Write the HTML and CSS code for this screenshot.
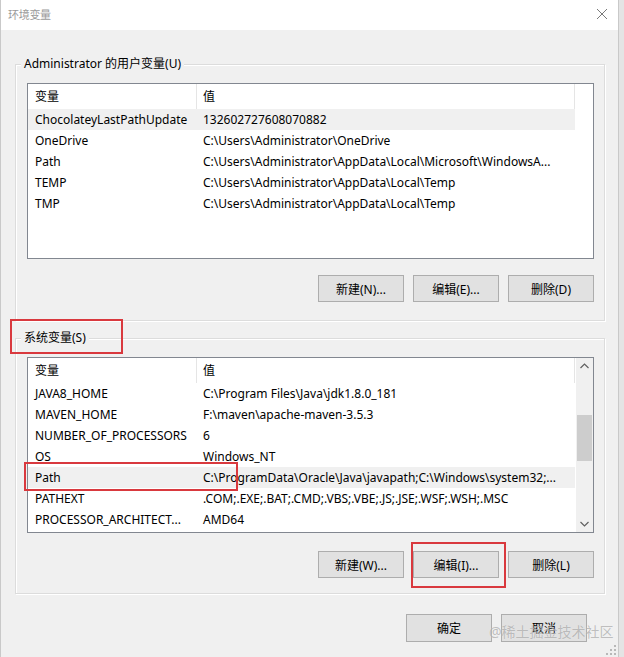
FILE: index.html
```html
<!DOCTYPE html>
<html lang="zh-CN">
<head>
<meta charset="utf-8">
<title>环境变量</title>
<link rel="stylesheet" href="styles.css">
</head>
<body>
<div class="window">
  <div class="titlebar">
    <span class="title">环境变量</span>
    <svg class="close" width="12" height="12" viewBox="0 0 12 12"><path d="M1 1 L11 11 M11 1 L1 11" stroke="#7a7a7a" stroke-width="1" fill="none"/></svg>
  </div>
  <div class="body">
    <div class="group g1">
      <span class="legend">Administrator 的用户变量(U)</span>
      <div class="list">
        <div class="list-main">
          <div class="row head"><div class="c1">变量</div><div class="c2">值</div></div>
          <div class="row sel"><div class="c1">ChocolateyLastPathUpdate</div><div class="c2">132602727608070882</div></div>
          <div class="row"><div class="c1">OneDrive</div><div class="c2">C:\Users\Administrator\OneDrive</div></div>
          <div class="row"><div class="c1">Path</div><div class="c2">C:\Users\Administrator\AppData\Local\Microsoft\WindowsA...</div></div>
          <div class="row"><div class="c1">TEMP</div><div class="c2">C:\Users\Administrator\AppData\Local\Temp</div></div>
          <div class="row"><div class="c1">TMP</div><div class="c2">C:\Users\Administrator\AppData\Local\Temp</div></div>
        </div>
      </div>
      <div class="buttons">
        <button class="btn">新建(N)...</button>
        <button class="btn">编辑(E)...</button>
        <button class="btn">删除(D)</button>
      </div>
    </div>
    <div class="group g2">
      <span class="legend">系统变量(S)</span>
      <div class="list">
        <div class="list-main">
          <div class="row head"><div class="c1">变量</div><div class="c2">值</div></div>
          <div class="row"><div class="c1">JAVA8_HOME</div><div class="c2">C:\Program Files\Java\jdk1.8.0_181</div></div>
          <div class="row"><div class="c1">MAVEN_HOME</div><div class="c2">F:\maven\apache-maven-3.5.3</div></div>
          <div class="row"><div class="c1">NUMBER_OF_PROCESSORS</div><div class="c2">6</div></div>
          <div class="row"><div class="c1">OS</div><div class="c2">Windows_NT</div></div>
          <div class="row sel"><div class="c1">Path</div><div class="c2">C:\ProgramData\Oracle\Java\javapath;C:\Windows\system32;...</div></div>
          <div class="row"><div class="c1">PATHEXT</div><div class="c2">.COM;.EXE;.BAT;.CMD;.VBS;.VBE;.JS;.JSE;.WSF;.WSH;.MSC</div></div>
          <div class="row"><div class="c1">PROCESSOR_ARCHITECT...</div><div class="c2">AMD64</div></div>
        </div>
        <div class="scrollbar">
          <svg class="arrow" width="17" height="17" viewBox="0 0 17 17"><path d="M4.5 10 L8.5 6 L12.5 10" stroke="#606060" stroke-width="1.2" fill="none"/></svg>
          <div class="track"><div class="thumb"></div></div>
          <svg class="arrow" width="17" height="17" viewBox="0 0 17 17"><path d="M4.5 7 L8.5 11 L12.5 7" stroke="#606060" stroke-width="1.2" fill="none"/></svg>
        </div>
      </div>
      <div class="buttons">
        <button class="btn">新建(W)...</button>
        <button class="btn">编辑(I)...</button>
        <button class="btn">删除(L)</button>
      </div>
    </div>
    <div class="dialog-buttons">
      <button class="btn">确定</button>
      <button class="btn">取消</button>
    </div>
  </div>
  <div class="mark mark-group"></div>
  <div class="mark mark-path"></div>
  <div class="mark mark-edit"></div>
  <span class="watermark">@稀土掘金技术社区</span>
  <svg class="grip" width="10" height="10" viewBox="0 0 10 10"><g fill="#b8b8b8"><rect x="8" y="0" width="2" height="2"/><rect x="4" y="4" width="2" height="2"/><rect x="8" y="4" width="2" height="2"/><rect x="0" y="8" width="2" height="2"/><rect x="4" y="8" width="2" height="2"/><rect x="8" y="8" width="2" height="2"/></g></svg>
</div>
</body>
</html>
```

FILE: styles.css
```css
* { box-sizing: border-box; }
html, body {
  margin: 0;
  padding: 0;
  background: #e4e4e4;
}
body {
  font-family: "Noto Sans", "Noto Sans CJK SC", sans-serif;
  font-size: 12px;
  color: #000;
}
.window {
  position: relative;
  width: 619px;
  height: 657px;
  background: #f0f0f0;
  border-left: 1px solid #c9c9c9;
  border-right: 1px solid #c9c9c9;
  overflow: hidden;
}
.titlebar {
  height: 30px;
  background: #fff;
  display: flex;
  align-items: center;
  justify-content: space-between;
  padding: 0 10px 2px 7px;
}
.title {
  font-size: 11px;
  color: #9a9a9a;
  letter-spacing: -0.3px;
}
.close { display: block; }
.body {
  padding: 34px 0 0 14px;
}
.group {
  position: relative;
  width: 590px;
  border: 1px solid #dcdcdc;
  box-shadow: 1px 1px 0 #fff, inset 1px 1px 0 #fff;
  padding: 18px 10px 18px 11px;
}
.g2 {
  margin-top: 17px;
  padding-bottom: 15px;
}
.legend {
  position: absolute;
  left: 5px;
  top: -9px;
  padding: 0 3px;
  line-height: 16px;
  background: #f0f0f0;
}
.list {
  height: 176px;
  background: #fff;
  border: 1px solid #828790;
  display: flex;
  overflow: hidden;
}
.list-main { flex: 1; min-width: 0; }
.row {
  display: grid;
  grid-template-columns: 169px 378px;
  height: 21px;
  align-items: center;
  white-space: nowrap;
}
.row .c1 { padding-left: 7px; overflow: hidden; }
.row .c2 { padding-left: 6px; overflow: hidden; }
.row.head {
  height: 25px;
  align-items: stretch;
}
.row.head > div {
  display: flex;
  align-items: center;
  border-right: 1px solid #e5e5e5;
  padding-bottom: 2px;
}
.row.sel .c1, .row.sel .c2 { background: #f0f0f0; height: 21px; line-height: 21px; }
.scrollbar {
  width: 17px;
  flex: none;
  display: flex;
  flex-direction: column;
  background: #f0f0f0;
}
.arrow { display: block; flex: none; }
.track {
  flex: 1;
  padding: 40px 1px 0 1px;
}
.thumb {
  height: 46px;
  background: #cdcdcd;
}
.buttons {
  display: flex;
  justify-content: flex-end;
  gap: 9px;
  margin-top: 16px;
}
.g2 .buttons { margin-top: 18px; }
.btn {
  width: 86px;
  height: 27px;
  background: #e1e1e1;
  border: 1px solid #adadad;
  font-family: inherit;
  font-size: 12px;
  color: #000;
  padding: 0;
  margin: 0;
}
.dialog-buttons {
  display: flex;
  justify-content: flex-end;
  gap: 9px;
  width: 572px;
  margin-top: 20px;
}
.dialog-buttons .btn { height: 28px; }
.mark {
  position: absolute;
  border: 2px solid #d9393e;
}
.mark-group { left: 9px; top: 319px; width: 113px; height: 35px; }
.mark-path { left: 23px; top: 462px; width: 214px; height: 29px; }
.mark-edit { left: 410px; top: 542px; width: 95px; height: 46px; }
.watermark {
  position: absolute;
  left: 488px;
  top: 622px;
  font-size: 14px;
  line-height: 20px;
  color: rgba(140, 140, 140, 0.55);
  text-shadow: 0 0 1px rgba(255,255,255,0.6);
  white-space: nowrap;
}
.grip {
  position: absolute;
  right: 2px;
  bottom: 2px;
}
```
